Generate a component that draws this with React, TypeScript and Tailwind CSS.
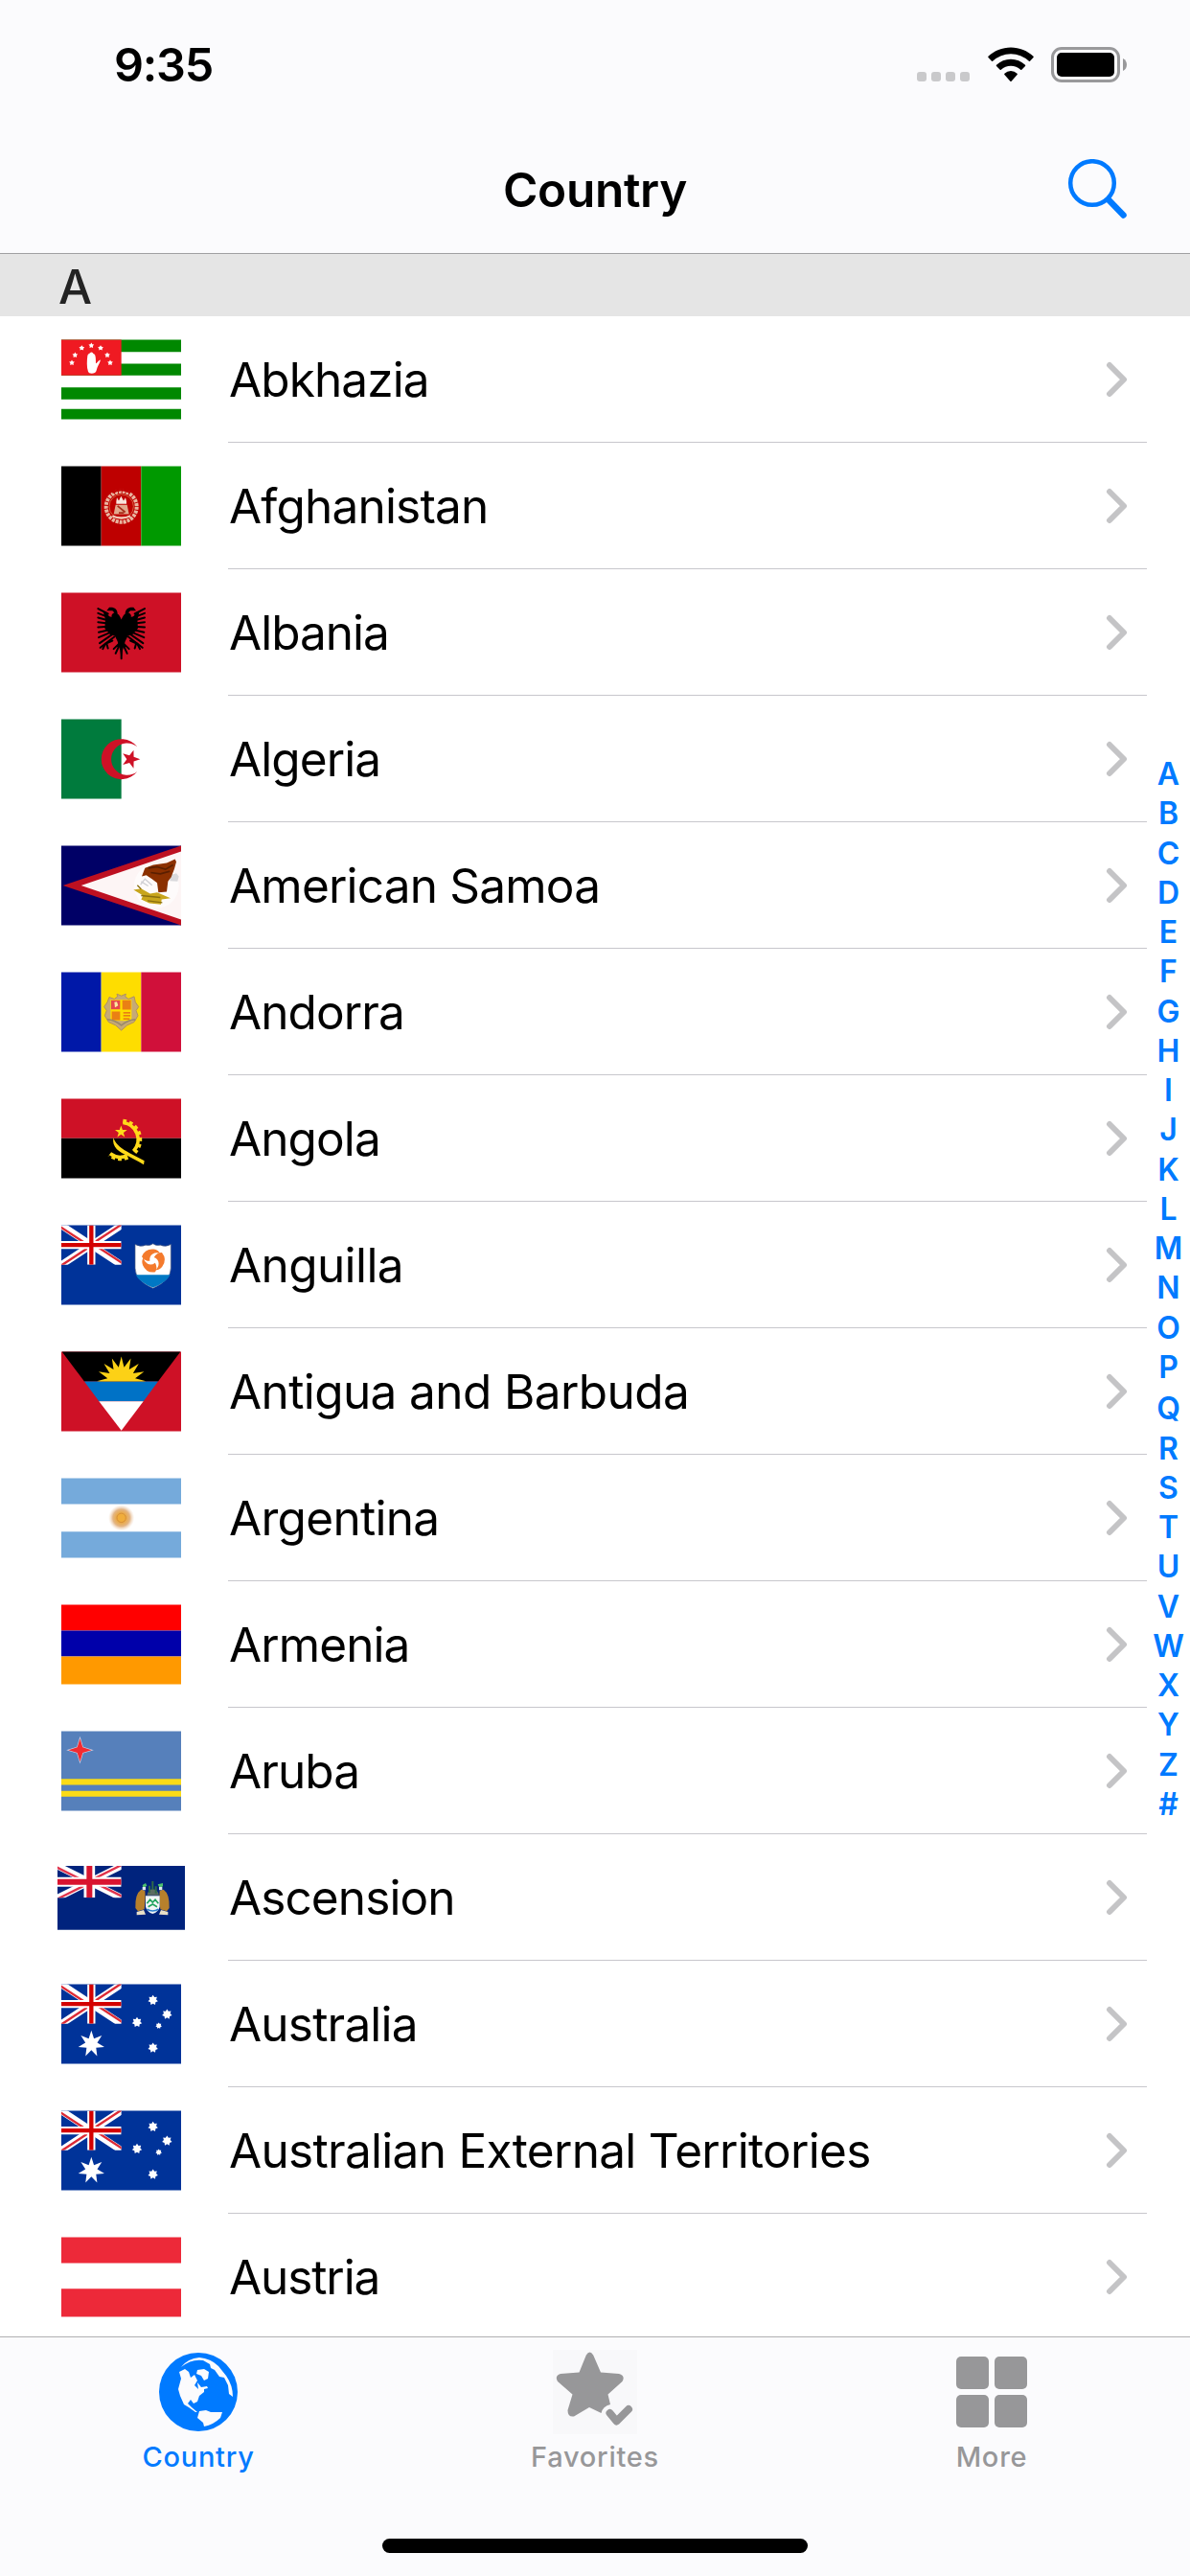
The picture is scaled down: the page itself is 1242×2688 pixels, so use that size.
import { ReactNode } from "react";

type Country = { name: string; tracking: string; flag: ReactNode };

const INDEX = "ABCDEFGHIJKLMNOPQRSTUVWXYZ#".split("");

function starPoints(cx: number, cy: number, outer: number, inner: number, count: number, start = -90) {
  const pts: string[] = [];
  for (let i = 0; i < count * 2; i++) {
    const r = i % 2 === 0 ? outer : inner;
    const a = ((start + (i * 180) / count) * Math.PI) / 180;
    pts.push(`${(cx + r * Math.cos(a)).toFixed(1)},${(cy + r * Math.sin(a)).toFixed(1)}`);
  }
  return pts.join(" ");
}

function Flag({ children }: { children: ReactNode }) {
  return (
    <svg className="w-[125px] h-[84px]" viewBox="0 -1.5 375 252">
      {children}
    </svg>
  );
}

function UnionJack() {
  return (
    <svg x="0" y="0" width="188" height="124" viewBox="0 0 188 124">
      <path d="M0 0L188 124M188 0L0 124" stroke="#fff" strokeWidth="22" />
      <path d="M-3 5L91 67M191 -4L97 58M191 119L97 57M-3 128L91 66" stroke="#dc2a35" strokeWidth="7" />
      <path d="M94 0V124M0 62H188" stroke="#fff" strokeWidth="25" />
      <path d="M94 0V124M0 62H188" stroke="#d40000" strokeWidth="13" />
    </svg>
  );
}

function Abkhazia() {
  const stars = [[33, 72], [43, 48], [64, 26], [94, 18], [123, 26], [144, 48], [153, 72]];
  return (
    <Flag>
      <path d="M0 0H375V38H0zM0 75H375V112H0zM0 149H375V187H0zM0 217H375V249H0z" fill="#008800" />
      <path d="M0 0H188V112H0z" fill="#ef1a22" />
      {stars.map(([x, y]) => (
        <polygon key={x} points={starPoints(x, y, 9, 5, 5)} fill="#fff" />
      ))}
      <path d="M82 50C84 42 88 44 90 41C94 36 99 40 101 44C107 44 108 55 108 74C112 74 116 64 123 63C120 76 112 84 110 96C108 108 86 108 84 100C79 85 80 65 82 50z" fill="#fff" />
    </Flag>
  );
}

function Afghanistan() {
  return (
    <Flag>
      <path d="M0 0H125V249H0z" fill="#000" />
      <path d="M125 0H250V249H125z" fill="#be0000" />
      <path d="M250 0H375V249H250z" fill="#009900" />
      <circle cx="188" cy="127" r="48" fill="none" stroke="#e9b6a0" strokeWidth="12" strokeDasharray="9 3" />
      <circle cx="188" cy="126" r="38" fill="none" stroke="#d2603f" strokeWidth="3" />
      <path d="M160 83Q188 66 216 83" fill="none" stroke="#be0000" strokeWidth="6" />
      <path d="M172 110L174 98L180 108L187 94L195 108L201 98L204 110V118H172z" fill="#f8e4dc" />
      <path d="M170 121H206L212 150H164z" fill="#e2a98e" />
      <path d="M176 124L200 144M180 146H196" stroke="#a8301c" strokeWidth="5" />
      <path d="M160 156Q188 168 216 156" fill="none" stroke="#f2c9b8" strokeWidth="7" />
    </Flag>
  );
}

function Albania() {
  return (
    <Flag>
      <path d="M0 0H375V249H0z" fill="#ce1126" />
      <g fill="none" stroke="#000" strokeWidth="6" strokeLinecap="round">
        <path d="M146 66L115 50M146 76L115 64M146 86L115 78M146 96L115 92M148 106L115 108M150 116L117 124M154 124L117 140M160 130L120 158M166 138L122 172" />
        <path d="M230 66L261 50M230 76L261 64M230 86L261 78M230 96L261 92M228 106L261 108M226 116L259 124M222 124L259 140M216 130L256 158M210 138L254 172" />
        <path d="M160 150L138 160L130 176M142 160L146 174M216 150L238 160L246 176M234 160L230 174" />
        <path d="M188 150L170 190M188 150L206 190M188 160V206M180 160L164 176M196 160L212 176" />
      </g>
      <path d="M188 84C184 76 182 70 176 66C176 52 166 44 150 46L142 56L160 56L166 62C158 66 156 72 158 76C150 76 146 70 140 60L132 62L138 84L136 112L152 130L168 136L176 152L184 180L188 208L192 180L200 152L208 136L224 130L240 112L238 84L244 62L236 60C230 70 226 76 218 76C220 72 218 66 210 62L216 56L234 56L226 46C210 44 200 52 200 66C194 70 192 76 188 84z" fill="#000" />
    </Flag>
  );
}

function Algeria() {
  return (
    <Flag>
      <path d="M0 0H188V249H0z" fill="#007b3d" />
      <path d="M238 86.400A63 63 0 1 0 238 163.600A50 50 0 1 1 238 86.400z" fill="#ce1126" />
      <polygon points={starPoints(217, 125, 30, 12, 5, 0)} fill="#ce1126" />
    </Flag>
  );
}

function AmericanSamoa() {
  return (
    <Flag>
      <path d="M0 0H375V249H0z" fill="#000066" />
      <path d="M5 124.500L375 0V249z" fill="#bd1021" />
      <path d="M62 124.500L375 18V231z" fill="#fdf5f5" />
      <circle cx="298" cy="125" r="70" fill="#fff" opacity=".6" />
      <path d="M340 92L360 86L368 96L364 112L340 110z" fill="#d9d9dc" />
      <path d="M248 122L262 104L284 124M250 112L272 126" fill="none" stroke="#cfcfd4" strokeWidth="4" />
      <path d="M252 96L262 70L288 60L330 54L356 42L360 50L354 72L344 98L334 112L330 144L304 146L300 116L284 104L266 92z" fill="#8b3000" />
      <path d="M272 70L300 66L326 74L350 60M280 84L310 88L340 80" fill="none" stroke="#5a1f00" strokeWidth="5" />
      <path d="M226 138L250 134L278 150L300 146L342 164L314 168L312 184L276 180L250 168L256 156z" fill="#c8a51c" />
      <path d="M238 124L250 136M250 156L310 162M270 172L316 178" stroke="#8a6f10" strokeWidth="4" />
    </Flag>
  );
}

function Andorra() {
  return (
    <Flag>
      <path d="M0 0H125V249H0z" fill="#0018a8" />
      <path d="M125 0H250V249H125z" fill="#fedd00" />
      <path d="M250 0H375V249H250z" fill="#d0103a" />
      <path d="M150 78L166 84L176 76L174 68L188 74L202 68L200 76L210 84L228 76L232 94L242 108L234 120L240 136L228 156L206 166L188 182L170 166L148 156L136 136L142 120L134 108L144 94z" fill="#c6aa76" stroke="#b0925e" strokeWidth="3" />
      <path d="M154 86H220V152H154z" fill="#fedd00" />
      <path d="M156 88H184V116H156z" fill="#e6484c" />
      <path d="M166 94L174 92L178 104L168 110z" fill="#fbe9a0" />
      <path d="M191 88H218V117H191zM158 123H184V150H158z" fill="#ea8014" />
      <path d="M194 127H216M194 136H216M194 146H214" stroke="#e2601a" strokeWidth="4" />
      <path d="M144 148Q166 148 188 166Q210 148 232 148" fill="none" stroke="#9b8a6b" strokeWidth="5" />
    </Flag>
  );
}

function Angola() {
  return (
    <Flag>
      <path d="M0 0H375V124H0z" fill="#ce1126" />
      <path d="M0 124H375V249H0z" fill="#000" />
      <g fill="none" stroke="#ffda1a">
        <path d="M193 75A53 53 0 0 1 226 164M206 178A53 53 0 0 1 153 172" strokeWidth="11" />
        <path d="M193 70A58 58 0 0 1 230 168M208 183A58 58 0 0 1 150 176" strokeWidth="13" strokeDasharray="11 9" />
      </g>
      <path d="M163 122C172 146 190 156 214 170L260 194L258 206L244 198L210 180C180 166 158 152 163 122z" fill="#ffda1a" />
      <polygon points={starPoints(187, 104, 20, 8, 5)} fill="#ffda1a" />
    </Flag>
  );
}

function Anguilla() {
  const dolphin = "M252 98Q262 72 290 75Q304 77 309 88Q296 84 286 90Q275 97 277 112Q260 112 252 98z";
  return (
    <Flag>
      <path d="M0 0H375V249H0z" fill="#003399" />
      <UnionJack />
      <path d="M231 60Q248 70 264 62Q278 66 287 58Q296 66 310 62Q326 70 343 60V134Q343 172 287 197Q231 172 231 134z" fill="#fff" stroke="#4a5a80" strokeWidth="2" />
      <path d="M233 155H341Q330 178 287 195Q244 178 233 155z" fill="#0078c4" />
      <g fill="#f47a2c">
        <path d={dolphin} />
        <path d={dolphin} transform="rotate(120 287 110)" />
        <path d={dolphin} transform="rotate(240 287 110)" />
      </g>
    </Flag>
  );
}

function Antigua() {
  return (
    <Flag>
      <path d="M0 0H375V249H0z" fill="#ce1126" />
      <path d="M2 0H373L303 93H72z" fill="#000" />
      <path d="M72 93H303L257 155H118z" fill="#0072c6" />
      <path d="M118 155H257L188 247z" fill="#fff" />
      <svg x="0" y="0" width="375" height="93" viewBox="0 0 375 93">
        <polygon points={starPoints(188, 92, 77, 44, 16)} fill="#fcd116" />
      </svg>
    </Flag>
  );
}

function Argentina() {
  return (
    <Flag>
      <defs>
        <radialGradient id="sun-of-may">
          <stop offset="0" stopColor="#eda63a" />
          <stop offset=".4" stopColor="#e9ab4e" />
          <stop offset=".65" stopColor="#e3b585" />
          <stop offset="1" stopColor="#f3ddcb" stopOpacity="0" />
        </radialGradient>
      </defs>
      <path d="M0 0H375V81H0zM0 167H375V249H0z" fill="#75aadb" />
      <circle cx="188" cy="124" r="41" fill="url(#sun-of-may)" />
      <circle cx="188" cy="124" r="14" fill="#f0ad3c" stroke="#d68f3a" strokeWidth="3" />
    </Flag>
  );
}

function Armenia() {
  return (
    <Flag>
      <path d="M0 0H375V81H0z" fill="#ff0000" />
      <path d="M0 81H375V162H0z" fill="#0000aa" />
      <path d="M0 162H375V249H0z" fill="#ff9900" />
    </Flag>
  );
}

function Aruba() {
  return (
    <Flag>
      <path d="M0 0H375V249H0z" fill="#5680bb" />
      <path d="M0 149H375V168H0zM0 187H375V205H0z" fill="#fadb17" />
      <polygon points={starPoints(58.500, 59, 43, 14, 4)} fill="#c9d0e4" />
      <polygon points={starPoints(58.500, 59, 36, 12, 4)} fill="#f42a30" />
    </Flag>
  );
}

function Ascension() {
  return (
    <svg className="w-[133px] h-[67px]" viewBox="0 0 399 201">
      <path d="M0 0H399V200H0z" fill="#00237d" />
      <svg x="0" y="0" width="200" height="100" viewBox="0 0 200 100">
        <path d="M0 0L200 100M200 0L0 100" stroke="#fff" strokeWidth="21" />
        <path d="M-3 4L97 54M203 -4L103 46M203 96L103 46M-3 105L97 55" stroke="#e0344c" strokeWidth="7" />
        <path d="M100 0V100" stroke="#fff" strokeWidth="35" />
        <path d="M0 50H200" stroke="#fff" strokeWidth="30" />
        <path d="M100 0V100" stroke="#d9142f" strokeWidth="18" />
        <path d="M0 50H200" stroke="#d9142f" strokeWidth="18" />
      </svg>
      <path d="M262 74Q242 88 244 132L252 142L272 136Q276 100 274 78zM332 74Q352 88 350 132L342 142L322 136Q318 100 320 78z" fill="#b7802c" />
      <path d="M248 144L270 138L276 152L248 154zM346 144L324 138L318 152L346 154z" fill="#e8dfc8" />
      <path d="M276 94H320V128Q316 144 298 150Q280 144 276 128z" fill="#f2f7f6" />
      <path d="M280 118L290 106L298 114L306 106L316 118M284 128L298 120L312 128" fill="none" stroke="#1fa35c" strokeWidth="5" />
      <path d="M280 136Q298 146 316 136" fill="none" stroke="#2b7fd0" strokeWidth="5" />
      <path d="M280 92Q284 74 298 72Q314 74 318 92z" fill="#5c6b62" />
      <path d="M298 48V74M288 62V84M308 64V86" stroke="#2f6b48" strokeWidth="6" />
      <path d="M266 60L276 54L280 62L268 70zM314 58L330 54L330 64L320 70z" fill="#4dc06e" />
      <path d="M266 66H276V76H266zM318 66H328V76H318z" fill="#dfe8ee" />
    </svg>
  );
}

function Australia() {
  const stars = [[287, 50, 16], [331, 94, 16], [237, 119, 16], [305, 130, 10], [287, 199, 16]];
  return (
    <Flag>
      <path d="M0 0H375V249H0z" fill="#003399" />
      <UnionJack />
      <polygon points={starPoints(94, 187, 42, 19, 7)} fill="#fff" />
      {stars.map(([x, y, r]) => (
        <polygon key={y} points={starPoints(x, y, r, r * 0.65, 7)} fill="#fff" />
      ))}
    </Flag>
  );
}

function Austria() {
  return (
    <Flag>
      <path d="M0 0H375V81H0zM0 161H375V249H0z" fill="#ed2939" />
    </Flag>
  );
}

const COUNTRIES: Country[] = [
  { name: "Abkhazia", tracking: "tracking-[-0.9px]", flag: <Abkhazia /> },
  { name: "Afghanistan", tracking: "tracking-[-0.8px]", flag: <Afghanistan /> },
  { name: "Albania", tracking: "tracking-[-1px]", flag: <Albania /> },
  { name: "Algeria", tracking: "tracking-[-0.9px]", flag: <Algeria /> },
  { name: "American Samoa", tracking: "tracking-[-0.8px]", flag: <AmericanSamoa /> },
  { name: "Andorra", tracking: "tracking-[-0.9px]", flag: <Andorra /> },
  { name: "Angola", tracking: "tracking-[-0.9px]", flag: <Angola /> },
  { name: "Anguilla", tracking: "tracking-[-0.6px]", flag: <Anguilla /> },
  { name: "Antigua and Barbuda", tracking: "tracking-[-0.6px]", flag: <Antigua /> },
  { name: "Argentina", tracking: "tracking-[-0.7px]", flag: <Argentina /> },
  { name: "Armenia", tracking: "tracking-[-0.9px]", flag: <Armenia /> },
  { name: "Aruba", tracking: "tracking-[-0.9px]", flag: <Aruba /> },
  { name: "Ascension", tracking: "tracking-[-0.9px]", flag: <Ascension /> },
  { name: "Australia", tracking: "tracking-[-0.8px]", flag: <Australia /> },
  { name: "Australian External Territories", tracking: "tracking-[-0.7px]", flag: <Australia /> },
  { name: "Austria", tracking: "tracking-[-1.1px]", flag: <Austria /> },
];

function StatusBar() {
  return (
    <div className="h-[132px] flex items-start justify-between pl-[119px] pr-[65px]">
      <span className="mt-[38px] text-[48.5px] leading-[60px] font-semibold tracking-[-1.2px]">9:35</span>
      <div className="flex items-start mt-[49px]">
        <div className="flex gap-[5px] mt-[26px] mr-[19px]">
          <span className="size-[10px] rounded-[3px] bg-[#c9c9cb]" />
          <span className="size-[10px] rounded-[3px] bg-[#c9c9cb]" />
          <span className="size-[10px] rounded-[3px] bg-[#c9c9cb]" />
          <span className="size-[10px] rounded-[3px] bg-[#c9c9cb]" />
        </div>
        <svg className="w-[48px] h-[37px] mr-[17px]" viewBox="0 0 48 37">
          <path d="M24 0.500C33 0.500 41.500 4 47.500 9.800Q48 10.400 47.500 11L44 14.700Q43.500 15.200 42.900 14.700A27.500 27.500 0 0 0 5.100 14.700Q4.500 15.200 4 14.700L0.500 11Q0 10.400 0.500 9.800C6.500 4 15 0.500 24 0.500z" />
          <path d="M24 12.700A22 22 0 0 1 39 18.800Q39.600 19.400 39 20L35.300 23.700Q34.700 24.200 34.200 23.700A15 15 0 0 0 13.800 23.700Q13.300 24.200 12.700 23.700L9 20Q8.400 19.400 9 18.800A22 22 0 0 1 24 12.700z" />
          <path d="M24 25A10 10 0 0 1 30.600 27.800Q31.200 28.400 30.600 29L24.600 35.700Q24 36.300 23.400 35.700L17.400 29Q16.800 28.400 17.400 27.800A10 10 0 0 1 24 25z" />
        </svg>
        <svg className="w-[81px] h-[37px]" viewBox="0 0 81 37">
          <rect x="2.500" y="1.500" width="69" height="34" rx="9.500" fill="none" stroke="#99999b" strokeWidth="3" />
          <rect x="7" y="6" width="60" height="25" rx="5" />
          <path d="M76 12C79 13.500 80 16 80 18.500S79 23.500 76 25z" fill="#99999b" />
        </svg>
      </div>
    </div>
  );
}

function NavBar() {
  return (
    <div className="grid grid-cols-3 items-center h-[132px]">
      <span />
      <h1 className="text-center text-[49.5px] leading-[60px] font-semibold tracking-[-0.3px]">Country</h1>
      <svg className="justify-self-end w-[64px] h-[64px] mr-[64px]" viewBox="0 0 64 64" fill="none" stroke="#007aff">
        <circle cx="26" cy="25" r="22.800" strokeWidth="4.500" />
        <path d="M43 42.500L58.500 58.500" strokeWidth="6.500" strokeLinecap="round" />
      </svg>
    </div>
  );
}

function CountryRow({ country, last }: { country: Country; last: boolean }) {
  return (
    <li className="flex h-[132px]">
      <div className="flex items-center justify-center w-[133px] ml-[60px] mr-[45px]">{country.flag}</div>
      <div className={`flex items-center justify-between w-[959px] pr-[20px] border-b ${last ? "border-transparent" : "border-[#c8c7cc]"}`}>
        <span className={`pl-[1px] text-[49.5px] leading-[60px] whitespace-nowrap ${country.tracking}`}>{country.name}</span>
        <svg className="w-[23px] h-[38px]" viewBox="0 0 23 38" fill="none">
          <path d="M4 4L19 19L4 34" stroke="#c4c4c6" strokeWidth="6" strokeLinecap="round" strokeLinejoin="round" />
        </svg>
      </div>
    </li>
  );
}

function AlphabetIndex() {
  return (
    <div className="absolute right-0 top-[787px] w-[45px] flex flex-col items-center text-[#007aff] text-[32px] font-semibold">
      {INDEX.map((letter) => (
        <span key={letter} className={`h-[41.28px] leading-[41.28px] ${letter === "Q" ? "mt-[2px]" : ""}`}>
          {letter}
        </span>
      ))}
    </div>
  );
}

function GlobeIcon() {
  return (
    <svg className="size-[82px]" viewBox="0 0 82 82">
      <circle cx="41" cy="41" r="41" fill="#007aff" />
      <g fill="#fbfbfd">
        <path d="M21 20L27 17L31 20L33 26L37 23L40 29L37 34L41 38L40 31L44 36L50 35L51 37L47 38L47 41L42 45L40 51L36 53L33 49L30 53L34 57L40 62L38 62L31 57L26 54L22 45L20 38L23 27z" />
        <path d="M40 18L47 17L52 20L51 27L47 29L44 24L39 22z" />
        <path d="M42 61L49 60L54 62H66L64 68Q57 75 47 77L46 73L40 68z" />
        <path d="M23 15Q30 6 42 5Q54 6 62 14L70 24Q77 34 77 46L73 43L72 34L68 26L63 25L58 18L54 16L53 12L46 8Q34 6 23 15z" />
      </g>
    </svg>
  );
}

function StarCheckIcon() {
  return (
    <svg className="size-[88px] bg-[#f8f8fa]" viewBox="0 0 88 88" fill="#979799">
      <path d="M34.800 5.500Q38.500 -0.500 42.200 5.500L50 23.500L69 25Q76 27 72.500 33L57.500 46.500L60 57Q52 59 50.500 66L38 60L22 69.500Q15.500 70.500 15.500 63L20.500 46.500L5 33Q1.500 27 8 25L27.500 23.500z" />
      <path d="M59.500 66L66.500 74.500L79 62" fill="none" stroke="#979799" strokeWidth="8" strokeLinecap="round" strokeLinejoin="round" />
    </svg>
  );
}

function TabBar() {
  return (
    <nav className="h-[250px] bg-[#fbfbfd] border-t border-[#b0b0b2] flex flex-col items-center text-[29px] leading-[36px] font-medium tracking-[0.75px] text-[#979799]">
      <div className="grid grid-cols-3 w-full">
        <div className="flex flex-col items-center pt-[16px] text-[#007aff]">
          <GlobeIcon />
          <span className="mt-[9px]">Country</span>
        </div>
        <div className="flex flex-col items-center pt-[13px]">
          <StarCheckIcon />
          <span className="mt-[6px]">Favorites</span>
        </div>
        <div className="flex flex-col items-center pt-[20px]">
          <div className="grid grid-cols-2 gap-[6px]">
            <span className="size-[34px] rounded-[5px] bg-[#979799]" />
            <span className="size-[34px] rounded-[5px] bg-[#979799]" />
            <span className="size-[34px] rounded-[5px] bg-[#979799]" />
            <span className="size-[34px] rounded-[5px] bg-[#979799]" />
          </div>
          <span className="mt-[13px]">More</span>
        </div>
      </div>
      <div className="w-[444px] h-[15px] mt-auto mb-[24px] rounded-full bg-black" />
    </nav>
  );
}

export default function App() {
  return (
    <div className="relative flex flex-col w-[1242px] h-[2688px] overflow-hidden bg-white text-black font-['Inter',sans-serif]">
      <header className="h-[265px] shrink-0 bg-[#fbfbfd] border-b border-[#a0a0a2]">
        <StatusBar />
        <NavBar />
      </header>
      <div className="h-[65px] shrink-0 flex items-center pt-[2px] pl-[61px] bg-[#e5e5e5] text-[#232323] text-[49.5px] leading-[60px] font-medium">A</div>
      <ul className="h-[2108px] shrink-0 overflow-hidden">
        {COUNTRIES.map((country, i) => (
          <CountryRow key={country.name} country={country} last={i === COUNTRIES.length - 1} />
        ))}
      </ul>
      <AlphabetIndex />
      <TabBar />
    </div>
  );
}
